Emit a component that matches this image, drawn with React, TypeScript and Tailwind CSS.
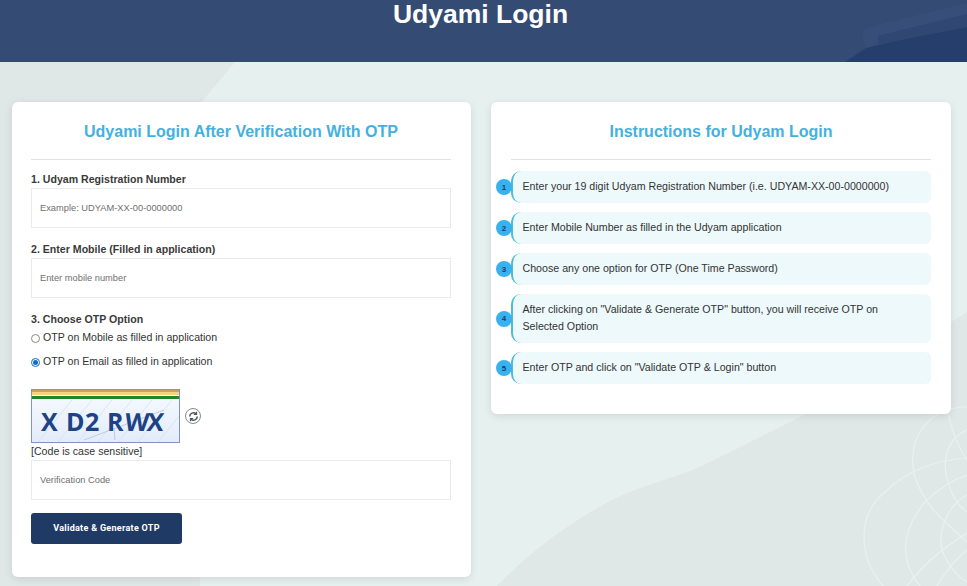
const font = "font-['Liberation_Sans',Arial,sans-serif]";

const steps = [
  'Enter your 19 digit Udyam Registration Number (i.e. UDYAM-XX-00-0000000)',
  'Enter Mobile Number as filled in the Udyam application',
  'Choose any one option for OTP (One Time Password)',
  'After clicking on "Validate & Generate OTP" button, you will receive OTP on Selected Option',
  'Enter OTP and click on "Validate OTP & Login" button',
];

const Field = ({ label, placeholder }: { label: string; placeholder: string }) => (
  <div>
    <label className="block h-[18px] text-[10.6px] leading-[18px] font-bold text-[#3a3a3a]">{label}</label>
    <input
      readOnly
      placeholder={placeholder}
      className="block h-10 w-full border border-[#e8ecec] bg-white px-2 text-[9.3px] outline-none placeholder:text-[#6f6f6f]"
    />
  </div>
);

const Radio = ({ checked, label }: { checked?: boolean; label: string }) => (
  <div className="flex h-3 items-center gap-[3px] text-[10.6px] text-[#333]">
    {checked ? (
      <span className="flex h-[9px] w-[9px] items-center justify-center rounded-full border border-[#0a6fc9] bg-white">
        <span className="h-[5px] w-[5px] rounded-full bg-[#0a6fc9]" />
      </span>
    ) : (
      <span className="h-[9px] w-[9px] rounded-full border border-[#8a8a8a] bg-white" />
    )}
    {label}
  </div>
);

const Captcha = () => (
  <div className="flex items-center gap-[5px]">
    <div className="relative h-[54px] w-[149px] overflow-hidden border border-[#8296b8] bg-gradient-to-b from-[#f8fbff] to-[#e2ecfa]">
      <svg viewBox="0 0 147 52" className="absolute inset-0 h-full w-full">
        <rect width="147" height="2" fill="#c9a45a" />
        <rect y="2" width="147" height="3" fill="#f3d57e" />
        <rect y="5" width="147" height="1" fill="#ffffff" />
        <rect y="6" width="147" height="3" fill="#23862e" />
        <g stroke="#d3def0" strokeWidth="0.7">
          <path d="M6 52 L40 10 M26 52 L60 10 M46 52 L80 10 M66 52 L100 10 M86 52 L120 10 M106 52 L140 10 M126 52 L147 26" />
        </g>
        <path d="M52 50 L132 20 M82 38 L83 50" stroke="#a9bddb" strokeWidth="0.7" fill="none" />
      </svg>
      <div className="relative flex h-full items-center pl-[9px] pt-[11px] font-['Open_Sans',sans-serif] text-[25px] leading-none font-bold text-[#1d4285]">
        <span className="w-[25px]">X</span>
        <span className="w-[19px]">D</span>
        <span className="w-[22px]">2</span>
        <span className="w-[18px]">R</span>
        <span className="-skew-x-6 tracking-[-2px]">WX</span>
      </div>
    </div>
    <span className="flex h-4 w-4 items-center justify-center rounded-full border border-[#8a8a8a] bg-white">
      <svg viewBox="0 0 16 16" className="h-[11px] w-[11px]" fill="none" stroke="#4b5563" strokeWidth="2.2">
        <path d="M2.5 8a5.5 5.5 0 0 1 9.2-4" />
        <path d="M13.5 8a5.5 5.5 0 0 1-9.2 4" />
        <path d="M12.5 1v4H8.5" strokeWidth="1.6" />
        <path d="M3.5 15v-4h4" strokeWidth="1.6" />
      </svg>
    </span>
  </div>
);

const Backdrop = () => (
  <svg viewBox="0 0 967 524" className="absolute inset-0 h-full w-full">
    <path
      d="M235 0 L967 0 L967 250 L800 355 C760 375 725 393 693 408 C670 416 650 422 627 431 C605 441 590 450 573 461 C540 483 515 505 497 524 L200 524 L195 48 Z"
      fill="#e6f0ef"
    />
    <g fill="none" stroke="#e8f1f0" strokeWidth="1.2">
      <path d="M883 524 C855 490 860 450 885 430 C905 410 935 398 967 396" />
      <path d="M920 524 C900 500 900 470 925 440 C940 425 955 417 967 413" />
      <path d="M967 433 C945 445 935 475 945 495 C950 505 958 515 967 520" />
      <path d="M967 345 C930 345 905 375 915 415 C925 445 945 460 967 480" />
      <path d="M967 368 C950 375 940 395 948 420 C952 435 960 445 967 450" />
      <path d="M948 351 C952 370 958 385 967 398" />
      <path d="M907 524 C925 500 945 485 967 471" />
      <path d="M937 524 C945 510 955 498 967 488" />
    </g>
  </svg>
);

export default function App() {
  return (
    <div className={`${font} h-[586px] overflow-hidden bg-[#dfe8e7]`}>
      <header className="relative h-[62px] overflow-hidden bg-[#344b74]">
        <svg viewBox="0 0 967 62" className="absolute inset-0 h-full w-full">
          <path d="M845 62 L866 48 L900 40 L967 27 L967 62 Z" fill="#263e6b" />
          <path d="M863 30 L880 24 L967 3 L967 14 L878 36 L878 44 L866 48 L862 38 Z" fill="#374f78" />
          <path d="M878 36 L967 14 L967 27 L900 40 L878 44 Z" fill="#2f4772" />
        </svg>
        <h1 className="relative -mt-[1px] pr-[6px] text-center text-[26.5px] leading-[30px] font-bold text-white">Udyami Login</h1>
      </header>

      <main className="relative h-[524px]">
        <Backdrop />
        <div className="relative flex items-start gap-5 pl-3 pr-4 pt-10">
          <section className="h-[475px] w-[459px] rounded-md bg-white pl-[19px] pr-5 shadow-[0_2px_8px_rgba(0,0,0,0.1)]">
            <h2 className="border-b border-[#dfe3e3] pb-[18px] pt-5 text-center text-[16px] leading-[19px] font-bold text-[#45b0e0]">
              Udyami Login After Verification With OTP
            </h2>
            <div className="mt-[10px] flex flex-col gap-[12px]">
              <Field label="1. Udyam Registration Number" placeholder="Example: UDYAM-XX-00-0000000" />
              <Field label="2. Enter Mobile (Filled in application)" placeholder="Enter mobile number" />
            </div>
            <p className="mt-[13px] text-[10.6px] leading-[16px] font-bold text-[#3a3a3a]">3. Choose OTP Option</p>
            <div className="mt-[5px] flex flex-col gap-3">
              <Radio label="OTP on Mobile as filled in application" />
              <Radio checked label="OTP on Email as filled in application" />
            </div>
            <div className="mt-[21px]">
              <Captcha />
            </div>
            <p className="mt-[2px] text-[10.6px] leading-[13px] text-[#333]">[Code is case sensitive]</p>
            <input
              readOnly
              placeholder="Verification Code"
              className="mt-[2px] block h-10 w-full border border-[#e8ecec] bg-white px-2 text-[9.3px] outline-none placeholder:text-[#6f6f6f]"
            />
            <button className="mt-[13px] h-[31px] w-[151px] rounded-[3px] bg-[#203a66] font-['Roboto',sans-serif] text-[9px] font-bold tracking-[0.3px] text-white">
              Validate &amp; Generate OTP
            </button>
          </section>

          <section className="h-[312px] w-[460px] rounded-md bg-white px-5 shadow-[0_2px_8px_rgba(0,0,0,0.1)]">
            <h2 className="border-b border-[#dfe3e3] pb-[18px] pt-5 text-center text-[16px] leading-[19px] font-bold text-[#45b0e0]">
              Instructions for Udyam Login
            </h2>
            <ol className="mt-[11px] flex flex-col gap-[9px]">
              {steps.map((step, i) => (
                <li
                  key={step}
                  className="relative rounded-l-[10px] rounded-r-md border-l-2 border-[#4fbcd6] bg-[#eef9fc] pb-2 pl-[9.5px] pr-8 pt-[7px] text-[10.65px] leading-[17px] text-[#333]"
                >
                  <span className="absolute top-1/2 -left-[17px] flex h-4 w-4 -translate-y-1/2 items-center justify-center rounded-full bg-[#38b2ef] text-[8px] font-bold text-[#1d3a66]">
                    {i + 1}
                  </span>
                  {step}
                </li>
              ))}
            </ol>
          </section>
        </div>
      </main>
    </div>
  );
}
